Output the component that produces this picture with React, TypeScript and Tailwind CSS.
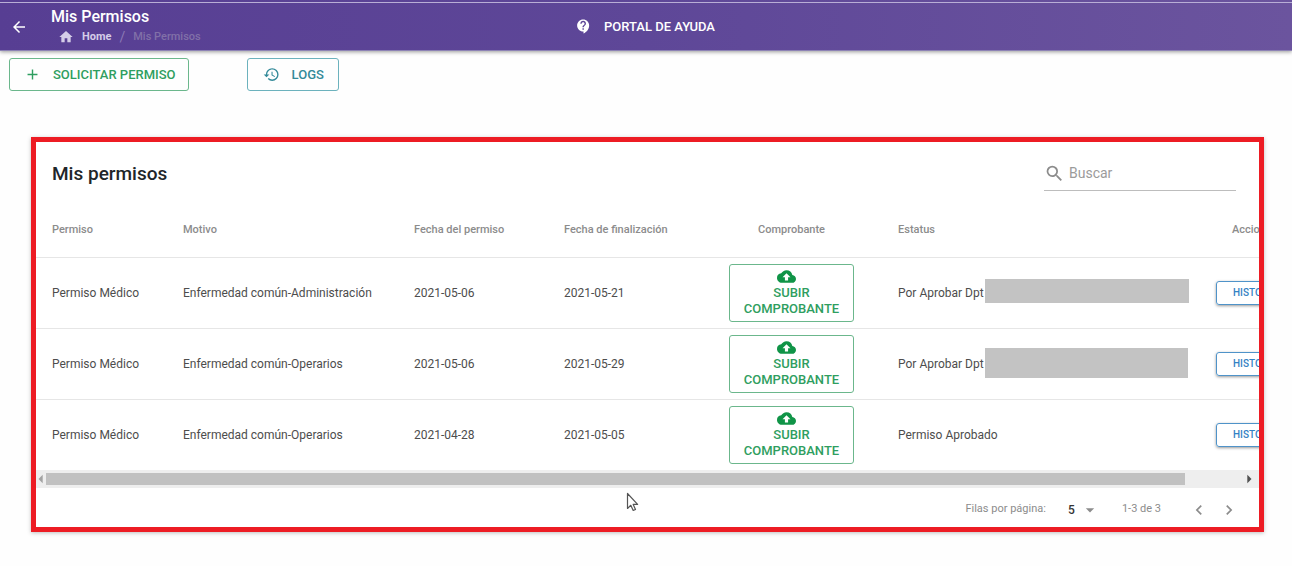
import { useState } from "react";
import {
  MdAdd,
  MdArrowBack,
  MdArrowDropDown,
  MdArrowLeft,
  MdArrowRight,
  MdBackup,
  MdChevronLeft,
  MdChevronRight,
  MdContactSupport,
  MdHistory,
  MdHome,
  MdSearch,
} from "react-icons/md";

type Permit = {
  id: number;
  type: string;
  reason: string;
  start: string;
  end: string;
  status: string;
  // department name is covered up
  redacted?: string;
};

const permits: Permit[] = [
  { id: 1, type: "Permiso Médico", reason: "Enfermedad común-Administración", start: "2021-05-06", end: "2021-05-21", status: "Por Aprobar Dpt", redacted: "h-6 w-[204px] -mt-1" },
  { id: 2, type: "Permiso Médico", reason: "Enfermedad común-Operarios", start: "2021-05-06", end: "2021-05-29", status: "Por Aprobar Dpt", redacted: "h-[30px] w-[203px] -mt-[2px]" },
  { id: 3, type: "Permiso Médico", reason: "Enfermedad común-Operarios", start: "2021-04-28", end: "2021-05-05", status: "Permiso Aprobado" },
];

function TopBar() {
  return (
    <header className="border-b border-[#8d83b5] bg-gradient-to-r from-[#573e93] via-[#5e4798] to-[#6b549e] pt-[2px] text-white shadow-[0_1px_4px_rgba(0,0,0,0.4)]">
      <div className="h-px bg-[#b9aed6]" />
      <div className="grid h-[47px] grid-cols-3 items-center">
        <div className="flex items-center gap-[23px] pl-[10px]">
          <button type="button" aria-label="Volver"><MdArrowBack size={18} /></button>
          <div>
            <h1 className="text-[16px] leading-5 font-medium">Mis Permisos</h1>
            <nav className="flex items-center gap-2 pl-[7px] text-[11px] leading-5" aria-label="Ruta">
              <MdHome size={16} className="text-[#d5cde8]" />
              <a href="#home" className="font-bold text-[#d5cde8]">Home</a>
              <span className="text-[14px] text-[#8b79b5]">/</span>
              <span className="font-medium text-[#8170a8]">Mis Permisos</span>
            </nav>
          </div>
        </div>
        <a href="#ayuda" className="flex items-center justify-center gap-3 pr-[2px] text-[13px] font-medium">
          <MdContactSupport size={17} />
          PORTAL DE AYUDA
        </a>
      </div>
    </header>
  );
}

function PermitRow({ permit }: { permit: Permit }) {
  return (
    <tr className="h-[71px] border-b border-[#e6e6e6] last:border-b-0">
      <td className="pl-4">{permit.type}</td>
      <td className="pl-4">{permit.reason}</td>
      <td className="pl-4">{permit.start}</td>
      <td className="pl-4">{permit.end}</td>
      <td className="pr-7 pl-4">
        <button type="button" className="flex h-[58px] w-full flex-col items-center justify-center rounded-[3px] border border-[#6bb78c] text-[13px] leading-4 font-medium text-[#2f9e60]">
          <MdBackup size={19} className="-mt-[2px] -mb-px -ml-[10px] text-[#109447]" />
          <span className="text-center">SUBIR COMPROBANTE</span>
        </button>
      </td>
      <td className="pl-4">
        <div className="flex items-center gap-px">
          {permit.status}
          {permit.redacted && <span className={`${permit.redacted} bg-[#c3c3c3]`} />}
        </div>
      </td>
      <td className="pl-4">
        <button type="button" className="h-6 rounded-[3px] border border-[#4f93c9] px-4 text-[10px] font-medium text-[#3482c4] shadow-[0_1px_3px_rgba(0,0,0,0.4)]">
          HISTORIAL
        </button>
      </td>
    </tr>
  );
}

export default function App() {
  const [query, setQuery] = useState("");
  const [pageSize, setPageSize] = useState("5");

  const visible = permits.filter((p) =>
    `${p.type} ${p.reason} ${p.status}`.toLowerCase().includes(query.toLowerCase())
  );

  return (
    <div className="min-h-screen bg-[#fefefe] font-['Roboto',sans-serif]">
      <TopBar />

      <div className="flex gap-[58px] px-[9px] pt-[7px]">
        <button type="button" className="flex h-[33px] items-center gap-3 rounded-[3px] border border-[#6bb78c] pr-3 pl-[14px] text-[13px] font-medium text-[#2f9e60]">
          <MdAdd size={17} />
          SOLICITAR PERMISO
        </button>
        <button type="button" className="flex h-[33px] items-center gap-3 rounded-[3px] border border-[#6cb2bd] pr-[14px] pl-[15px] text-[13px] font-medium text-[#338a99]">
          <MdHistory size={17} />
          LOGS
        </button>
      </div>

      <main className="mt-[46px] mr-7 ml-[31px] border-5 border-[#ed1c24] bg-white shadow-[0_1px_4px_rgba(0,0,0,0.25)]">
        <div className="flex h-[62px] items-center justify-between pt-[2px] pr-[23px] pl-4">
          <h2 className="text-[19px] font-medium text-[#212529]">Mis permisos</h2>
          <label className="flex h-[34px] w-48 items-center gap-1 border-b border-[#bdbdbd] text-[#8c8c8c]">
            <MdSearch size={21} className="shrink-0" />
            <input
              type="text"
              aria-label="Buscar"
              placeholder="Buscar"
              value={query}
              onChange={(e) => setQuery(e.target.value)}
              className="min-w-0 flex-1 text-[14px] outline-none placeholder:text-[#9b9b9b]"
            />
          </label>
        </div>

        <div className="overflow-x-auto [scrollbar-width:none]">
          <table className="w-full min-w-[1284px] table-fixed text-left text-[12px] text-[#4d4d4d]">
            <colgroup>
              <col className="w-[131px]" />
              <col className="w-[231px]" />
              <col className="w-[150px]" />
              <col className="w-[165px]" />
              <col className="w-[169px]" />
              <col className="w-[318px]" />
              <col />
            </colgroup>
            <thead>
              <tr className="h-[53px] border-b border-[#e6e6e6] text-[11px] text-[#8c8c8c]">
                <th className="pl-4 font-medium">Permiso</th>
                <th className="pl-4 font-medium">Motivo</th>
                <th className="pl-4 font-medium">Fecha del permiso</th>
                <th className="pl-4 font-medium">Fecha de finalización</th>
                <th className="pr-7 pl-4 text-center font-medium">Comprobante</th>
                <th className="pl-4 font-medium">Estatus</th>
                <th className="pl-8 font-medium">Acciones</th>
              </tr>
            </thead>
            <tbody>
              {visible.map((p) => <PermitRow key={p.id} permit={p} />)}
            </tbody>
          </table>
        </div>

        <div className="flex h-[18px] items-center bg-[#eeeeee] text-[#505050]">
          <MdArrowLeft size={20} className="-mx-[5px] shrink-0 text-[#a3a3a3]" />
          <div className="flex-1">
            <div className="h-3 w-21/22 bg-[#c1c1c1]" />
          </div>
          <MdArrowRight size={20} className="shrink-0" />
        </div>

        <div className="flex h-[39px] items-center justify-end pt-1 pr-5 text-[11px] text-[#8c8c8c]">
          <label htmlFor="page-size">Filas por página:</label>
          <div className="ml-[22px] flex items-center">
            <select
              id="page-size"
              value={pageSize}
              onChange={(e) => setPageSize(e.target.value)}
              className="w-3 appearance-none text-[12px] font-medium text-[#333333] outline-none"
            >
              <option>5</option>
              <option>10</option>
              <option>20</option>
            </select>
            <MdArrowDropDown size={20} />
          </div>
          <span className="ml-[22px]">1-3 de 3</span>
          <button type="button" aria-label="Página anterior" className="ml-7"><MdChevronLeft size={20} /></button>
          <button type="button" aria-label="Página siguiente" className="ml-[10px]"><MdChevronRight size={20} /></button>
        </div>
      </main>

      {/* mouse pointer */}
      <svg className="absolute top-[492px] left-[626px]" width="13" height="20" viewBox="0 0 13 20" aria-hidden="true">
        <path d="M1.5 1.5v15l3.3-3.2 2.4 5.2 2.3-1-2.3-5.1h4.4z" fill="#fff" stroke="#555" strokeWidth="1.2" strokeLinejoin="round" />
      </svg>
    </div>
  );
}
